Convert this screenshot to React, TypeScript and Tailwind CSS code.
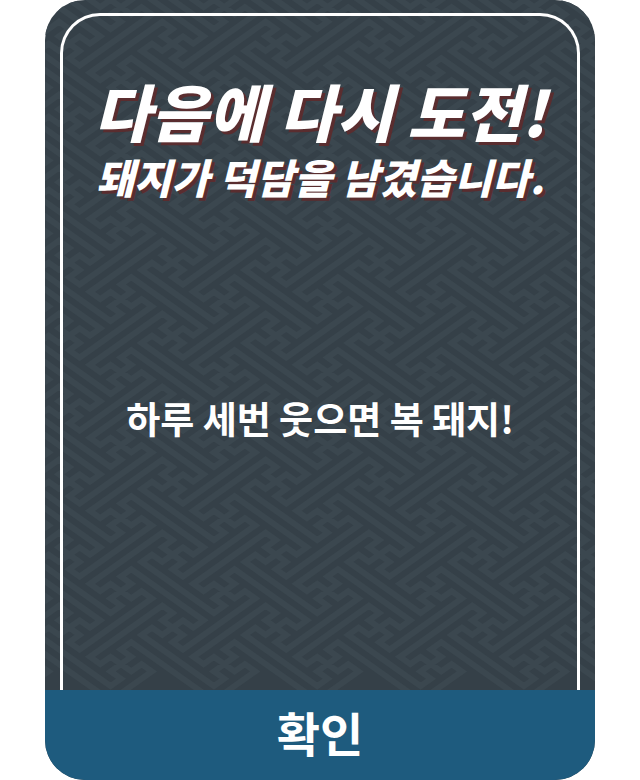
type Step = [number, number];

// Lattice axes: a runs down-right, b runs up-right. One cell between knots is 5 units.
const KNOT_ARM: Step[] = [[1, 0], [0, 1], [1, 0], [0, -7]];
const MIRROR_ARM: Step[] = [[1, 0], [0, -1], [1, 0], [0, 7]];
const LAST_ROW = 9;

function knot(a: number, b: number, arm: Step[]) {
  let d = '';
  let steps = arm;
  for (let i = 0; i < 4; i++) {
    d += `M${a} ${b}` + steps.map(([x, y]) => `l${x} ${y}`).join('');
    steps = steps.map(([x, y]): Step => [-y, x]);
  }
  return d;
}

function fretPath() {
  let d = '';
  for (let row = -1; row <= LAST_ROW; row++) {
    for (let col = -1; col < 7; col++) {
      // Full knots sit on the tile centres, mirrored ones half a tile away.
      const a = 5 * (col + row);
      const b = 5 * (col - row);
      d += knot(a, b, KNOT_ARM);
      if (row < LAST_ROW) d += knot(a, b - 5, MIRROR_ARM);
    }
  }
  return d;
}

const FRET = fretPath();

function FretBackground() {
  return (
    <svg className="absolute inset-0 h-full w-full" aria-hidden="true">
      <g transform="matrix(10.333 7.3 10.333 -7.3 -27.4 7.1)">
        <path d={FRET} fill="none" stroke="#3b474f" strokeWidth="0.5" strokeLinejoin="miter" />
      </g>
    </svg>
  );
}

export default function App() {
  return (
    <div className="bg-white font-['Noto_Sans_CJK_KR','Noto_Sans',sans-serif]">
      <main className="mx-auto flex min-h-screen w-full max-w-[550px] flex-col overflow-hidden rounded-[40px] bg-[#354048]">
        <section className="relative flex flex-1 flex-col overflow-hidden px-[15px] pt-[13px]">
          <FretBackground />
          <div className="relative flex flex-1 flex-col rounded-t-[40px] border-x-[3px] border-t-[3px] border-white text-center text-white">
            <h1 className="pt-[58px] font-black italic whitespace-nowrap [text-shadow:3px_3px_0_#5a2d2f]">
              <span className="block text-[62px] leading-[72px]">다음에 다시 도전!</span>
              <span className="block text-[41px] leading-[60px]">돼지가 덕담을 남겼습니다.</span>
            </h1>
            <p className="pt-[184px] text-[37px] leading-[56px] font-bold whitespace-nowrap">하루 세번 웃으면 복 돼지!</p>
          </div>
        </section>
        <button type="button" className="h-[90px] w-full bg-[#1e5b7e] pb-[6px] text-[47px] leading-[84px] font-bold text-white">
          확인
        </button>
      </main>
    </div>
  );
}
